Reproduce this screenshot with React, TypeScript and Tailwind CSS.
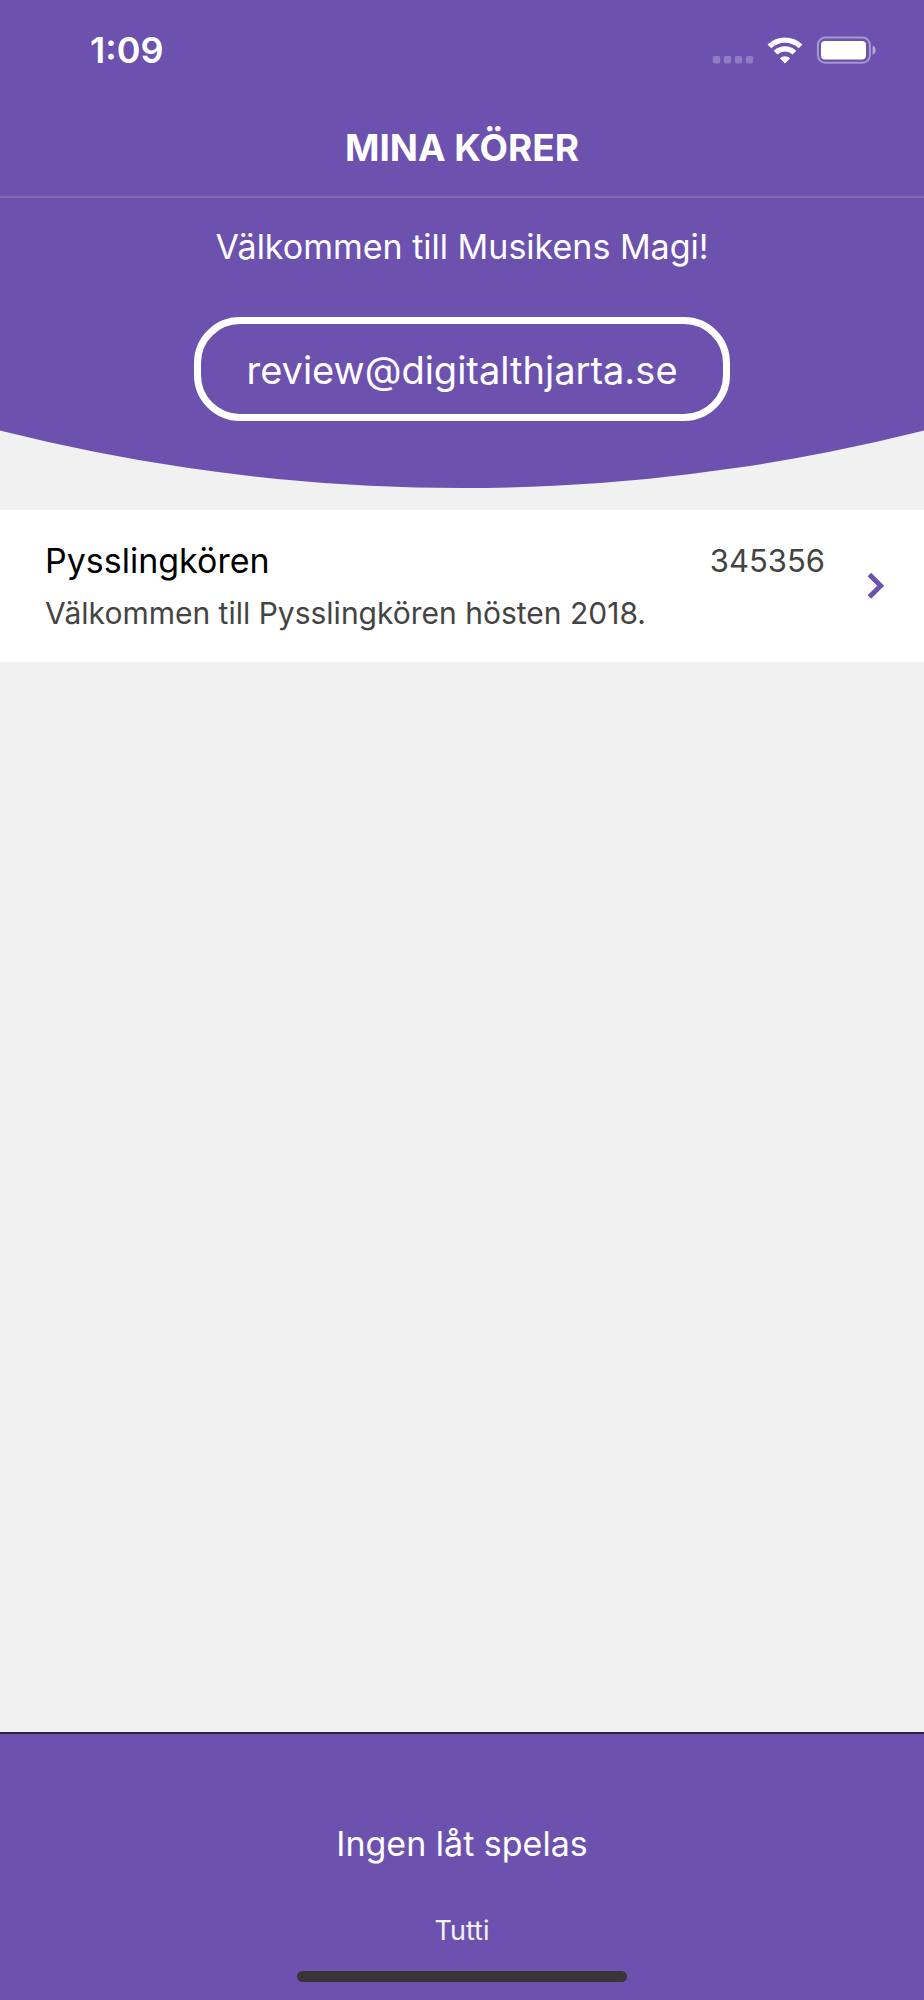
import React from 'react';

const choirs = [
  {
    id: 'pysslingkoren',
    name: 'Pysslingkören',
    code: '345356',
    description: 'Välkommen till Pysslingkören hösten 2018.',
  },
];

const StatusBar = () => (
  <div className="flex h-[100px] items-center justify-between pl-[90px] pr-12">
    <span className="text-[36px] leading-10 font-semibold">1:09</span>

    <svg width="164" height="28" viewBox="0 0 164 28" aria-hidden="true">
      {/* No signal */}
      <g fill="#fff" fillOpacity="0.25">
        <rect x="0.8" y="20" width="7.4" height="7.4" rx="1.6" />
        <rect x="11.8" y="20" width="7.4" height="7.4" rx="1.6" />
        <rect x="22.8" y="20" width="7.4" height="7.4" rx="1.6" />
        <rect x="33.8" y="20" width="7.4" height="7.4" rx="1.6" />
      </g>

      {/* Wifi */}
      <g fill="none" stroke="#fff" strokeWidth="5.4">
        <path d="M57.4 10.4 A22.5 22.5 0 0 1 88.6 10.4" />
        <path d="M63.6 16.7 A13.4 13.4 0 0 1 82.4 16.7" />
      </g>
      <path d="M73 27.5 L67.9 22.3 A7.4 7.4 0 0 1 78.1 22.3 Z" fill="#fff" />

      {/* Battery */}
      <rect x="105.9" y="1.4" width="52" height="25.4" rx="7.5" fill="none" stroke="#fff" strokeOpacity="0.4" strokeWidth="2" />
      <rect x="109" y="5" width="45" height="18.5" rx="4" fill="#fff" />
      <path d="M160.6 9.6 C164.6 11 164.6 17.4 160.6 18.8 Z" fill="#fff" fillOpacity="0.5" />
    </svg>
  </div>
);

const App = () => {
  return (
    <div className="min-h-screen flex flex-col bg-[#f1f1f1] font-['Inter',sans-serif]">

      {/* Header with the curved bottom edge */}
      <header className="bg-[#6c52ae] text-white h-[488px] [clip-path:ellipse(204%_1885px_at_50%_calc(100%-1885px))]">
        <StatusBar />
        <div className="flex h-[98px] items-center justify-center border-b-2 border-[#826cab]">
          <h1 className="text-[37px] leading-10 font-bold">MINA KÖRER</h1>
        </div>

        <div className="flex flex-col items-center pt-[25px]">
          <p className="text-[34px] leading-12">Välkommen till Musikens Magi!</p>
          <button
            type="button"
            className="mt-[46px] h-[104px] rounded-[46px] border-[7px] border-white px-[45px] pt-[2px] text-[38px] leading-12"
          >
            review@digitalthjarta.se
          </button>
        </div>
      </header>

      {/* Choir list */}
      <main className="flex-1 pt-[22px]">
        {choirs.map((choir) => (
          <a key={choir.id} href={`#${choir.id}`} className="flex h-[152px] items-center bg-white pl-[45px] pr-[39px]">
            <div className="flex-1 pt-[2px]">
              <div className="flex items-center justify-between">
                <h2 className="text-[34px] leading-13 text-black">{choir.name}</h2>
                <span className="text-[31px] leading-13 text-[#444]">{choir.code}</span>
              </div>
              <p className="text-[30px] leading-13 text-[#444]">{choir.description}</p>
            </div>
            <svg width="18" height="28" viewBox="0 0 18 28" className="ml-[42px]" aria-hidden="true">
              <path d="M2.4 2.6 L13.6 13.8 L2.4 25" fill="none" stroke="#6c52ae" strokeWidth="5" />
            </svg>
          </a>
        ))}
      </main>

      {/* Player */}
      <footer className="flex h-[268px] flex-col items-center border-t-2 border-[#2b2145] bg-[#6c52ae] text-white">
        <p className="mt-[86px] text-[34px] leading-12">Ingen låt spelas</p>
        <p className="mt-[43px] text-[27px] leading-10 text-[#f1f1f1]">Tutti</p>
        <div className="mt-5 h-[11px] w-[330px] rounded-full bg-[#363636]" />
      </footer>
    </div>
  );
};

export default App;
